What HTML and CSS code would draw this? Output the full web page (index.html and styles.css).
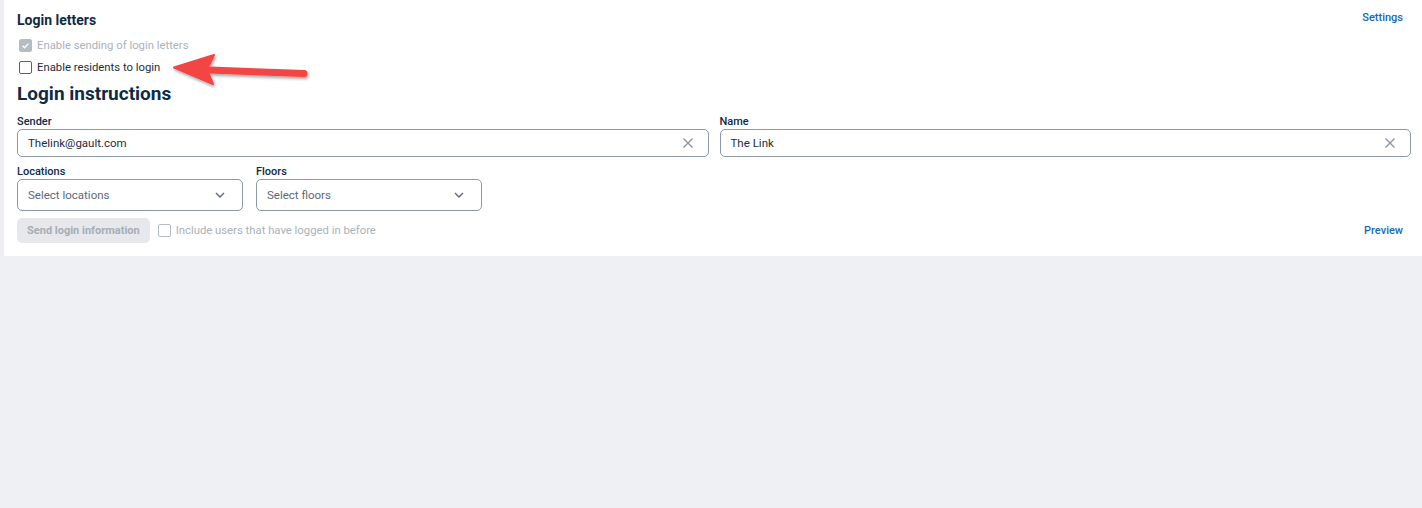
FILE: index.html
```html
<!DOCTYPE html>
<html>
<head>
<meta charset="utf-8">
<link rel="stylesheet" href="styles.css">
</head>
<body>
<div class="page">
  <section class="panel">
    <div class="head-row">
      <h2 class="title">Login letters</h2>
      <a class="link">Settings</a>
    </div>
    <label class="check disabled">
      <span class="box checked"><svg viewBox="0 0 13 13" width="13" height="13"><path d="M3 6.8l2.3 2.3L10 4.3" fill="none" stroke="#fff" stroke-width="1.6"/></svg></span>
      Enable sending of login letters
    </label>
    <label class="check">
      <span class="box"></span>
      Enable residents to login
    </label>
    <h1 class="heading">Login instructions</h1>
    <div class="row two">
      <div class="field">
        <div class="label">Sender</div>
        <div class="input">
          <span class="value">Thelink@gault.com</span>
          <svg class="clear" viewBox="0 0 12 12" width="12" height="12"><path d="M1.5 1.5l9 9M10.5 1.5l-9 9" stroke="#8a96a6" stroke-width="1.4" fill="none"/></svg>
        </div>
      </div>
      <div class="field">
        <div class="label">Name</div>
        <div class="input">
          <span class="value">The Link</span>
          <svg class="clear" viewBox="0 0 12 12" width="12" height="12"><path d="M1.5 1.5l9 9M10.5 1.5l-9 9" stroke="#8a96a6" stroke-width="1.4" fill="none"/></svg>
        </div>
      </div>
    </div>
    <div class="row selects">
      <div class="field">
        <div class="label">Locations</div>
        <div class="select">
          <span class="placeholder">Select locations</span>
          <svg viewBox="0 0 10 6" width="10" height="6"><path d="M1 1l4 4 4-4" stroke="#5b6878" stroke-width="1.4" fill="none"/></svg>
        </div>
      </div>
      <div class="field">
        <div class="label">Floors</div>
        <div class="select">
          <span class="placeholder">Select floors</span>
          <svg viewBox="0 0 10 6" width="10" height="6"><path d="M1 1l4 4 4-4" stroke="#5b6878" stroke-width="1.4" fill="none"/></svg>
        </div>
      </div>
    </div>
    <div class="actions">
      <button class="btn" disabled>Send login information</button>
      <label class="check disabled inline">
        <span class="box"></span>
        Include users that have logged in before
      </label>
      <a class="link push">Preview</a>
    </div>
    <svg class="arrow" width="160" height="40" viewBox="0 0 160 40">
      <defs>
        <filter id="sh" x="-20%" y="-50%" width="140%" height="200%">
          <feDropShadow dx="1" dy="2" stdDeviation="1.5" flood-color="#000" flood-opacity="0.35"/>
        </filter>
      </defs>
      <g filter="url(#sh)">
        <path d="M140 23.5 L46 20" stroke="#f44545" stroke-width="7" stroke-linecap="round" fill="none"/>
        <path d="M10 17.5 L50 5 L43 19.5 L49 34 Z" fill="#f44545" stroke="#f44545" stroke-width="2" stroke-linejoin="round"/>
      </g>
    </svg>
  </section>
</div>
</body>
</html>
```
FILE: styles.css
```css
* { box-sizing: border-box; }
html, body { margin: 0; padding: 0; }
body {
  background: #eff0f3;
  font-family: Roboto, "Liberation Sans", Arial, sans-serif;
  font-size: 12px;
  color: #0f2a45;
}
.page { padding-left: 4px; }
.panel {
  position: relative;
  background: #fff;
  height: 256px;
  padding: 10px 11px 0 13px;
}
.head-row {
  display: flex;
  justify-content: space-between;
  align-items: flex-start;
  height: 24px;
}
.title {
  margin: 2px 0 0 0;
  font-size: 14px;
  font-weight: 700;
  color: #0f2a45;
}
.link {
  color: #1767b8;
  font-weight: 500;
  font-size: 11px;
  padding-right: 8px;
  cursor: pointer;
}
.head-row .link { margin-top: 1px; }
.check {
  display: flex;
  align-items: center;
  gap: 5px;
  height: 22px;
  font-size: 11.3px;
  color: #1c2d40;
  padding-left: 2px;
}
.check.disabled { color: #a9b1bb; }
.box {
  width: 13px;
  height: 13px;
  border: 1px solid #57636f;
  border-radius: 2px;
  display: inline-flex;
  align-items: center;
  justify-content: center;
  background: #fff;
}
.check.disabled .box { border-color: #b6bcc4; }
.box.checked {
  background: #b6bcc4;
  border-color: #b6bcc4;
}
.box.checked svg { display: block; }
.heading {
  margin: 4px 0 0 0;
  font-size: 19px;
  font-weight: 700;
  line-height: 24px;
  color: #0f2a45;
}
.row { display: flex; }
.row.two { gap: 11px; margin-top: 9px; }
.row.two .field { flex: 1; }
.row.selects { gap: 13px; margin-top: 8px; }
.row.selects .field { width: 226px; }
.label {
  font-size: 11px;
  font-weight: 500;
  color: #0f2a45;
  line-height: 14px;
  margin-bottom: 0;
}
.input {
  height: 28px;
  border: 1px solid #8c99a8;
  border-radius: 5px;
  display: flex;
  align-items: center;
  justify-content: space-between;
  padding: 0 14px 0 10px;
  color: #1c2d40;
  font-size: 11.5px;
}
.select {
  height: 32px;
  border: 1px solid #8c99a8;
  border-radius: 5px;
  display: flex;
  align-items: center;
  justify-content: space-between;
  padding: 0 17px 0 10px;
  color: #5b6878;
  font-size: 11.5px;
}
.actions {
  display: flex;
  align-items: center;
  margin-top: 7px;
  gap: 8px;
}
.btn {
  height: 25px;
  border: none;
  border-radius: 5px;
  background: #e6e8eb;
  color: #a6adb6;
  font-family: inherit;
  font-weight: 700;
  font-size: 11px;
  padding: 0 10px;
}
.check.inline { padding-left: 0; }
.push { margin-left: auto; }
.arrow {
  position: absolute;
  left: 160px;
  top: 50px;
}
```
